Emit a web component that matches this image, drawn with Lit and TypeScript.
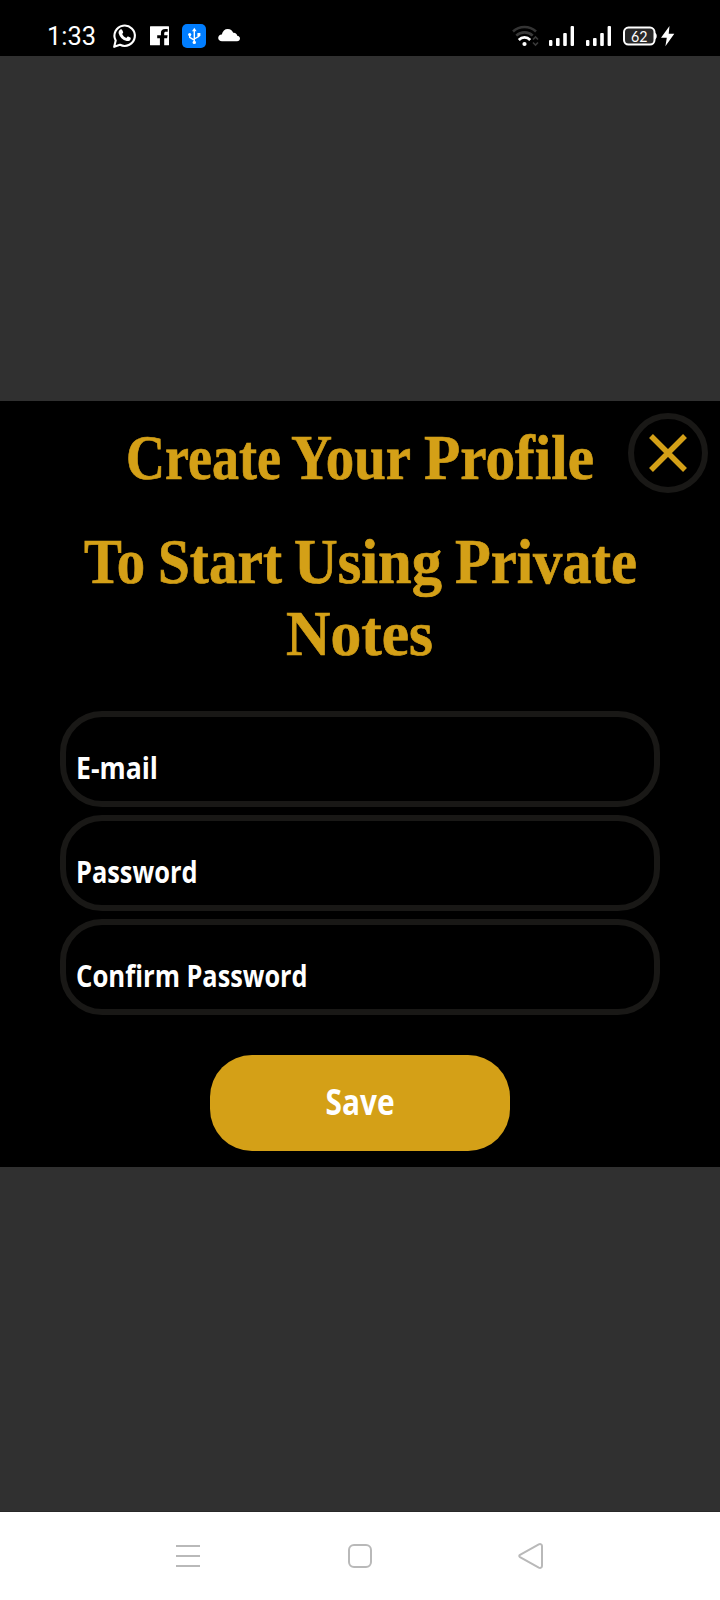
import { LitElement, html, svg, css } from "lit";
import { customElement, property } from "lit/decorators.js";

interface Word {
  t: string;
  x: number;
  w: number;
}

/** One line of text whose words are fitted to given widths. */
@customElement("fitted-line")
class FittedLine extends LitElement {
  @property({ attribute: false }) words: Word[] = [];
  @property({ type: Number }) width = 720;
  @property({ type: Number }) height = 72;
  @property({ type: Number }) baseline = 50;

  static styles = css`
    :host { display: block; }
    svg { display: block; overflow: visible; }
  `;

  render() {
    return html`<svg width=${this.width} height=${this.height} fill="currentColor">
      ${this.words.map(
        (w) => svg`<text x=${w.x} y=${this.baseline} textLength=${w.w} lengthAdjust="spacingAndGlyphs">${w.t}</text>`
      )}
    </svg>`;
  }
}

@customElement("status-bar")
class StatusBar extends LitElement {
  static styles = css`
    :host {
      display: flex;
      justify-content: space-between;
      height: 56px;
      box-sizing: border-box;
      padding: 22px 45px 0 46px;
      background: #000;
      color: #fff;
    }
    .group { display: flex; }
    svg { display: block; flex: none; }
    .clock { font: 400 25px Roboto, sans-serif; width: 66px; }
    .chat { margin-right: 13px; }
    .social { margin-right: 13px; }
    .usb { margin-right: 11px; }
    .wifi { margin-right: 10px; }
    .signal { margin-right: 12px; }
    .battery { margin-right: 3px; font: 400 15.5px Lato, sans-serif; }
  `;

  private signal() {
    return html`<svg class="signal" width="25" height="26" fill="#fff">
      <rect x="0" y="18" width="3.4" height="6" rx="1" />
      <rect x="7" y="16" width="3.6" height="8" rx="1" />
      <rect x="14.2" y="11" width="3.6" height="13" rx="1" />
      <rect x="21.6" y="4" width="3.4" height="20" rx="1" />
    </svg>`;
  }

  render() {
    return html`
      <div class="group">
        <fitted-line class="clock" .words=${[{ t: "1:33", x: 1, w: 49 }]} .width=${66} .height=${28} .baseline=${22.5}></fitted-line>
        <svg class="chat" width="25" height="28" fill="none" stroke="#fff">
          <path d="M2.200 24.800 3.700 18.600A10.200 10.200 0 1 1 8 22.800Z" stroke-width="2.100" stroke-linejoin="round" />
          <path fill="#fff" stroke="none" d="M8.300 7.600c.8-.6 1.500-.5 1.900.3l.9 2c.2.6 0 1-.9 2 .9 1.900 2.200 3.100 4.200 4 1-1.200 1.300-1.500 1.800-1.300l2.100 1c.6.3.6.9.2 1.800-.6 1.300-2.200 1.900-3.800 1.500-4.200-1-7-3.900-8-7.500-.4-1.500.3-2.900 1.600-3.800Z" />
        </svg>
        <svg class="social" width="19" height="28">
          <path fill="#fff" d="M.5 4.300h18a.5.5 0 0 1 .5.500v18a.5.5 0 0 1-.5.500h-4.300v-7h2.900l.5-3.100h-3.400v-1.800c0-1 .5-1.600 1.700-1.600h1.800V7h-2.500c-2.800 0-4.300 1.500-4.300 4.100v2.100H7.200v3.100h2.700v7H.5a.5.5 0 0 1-.5-.5v-18a.5.5 0 0 1 .5-.5Z" />
        </svg>
        <svg class="usb" width="24" height="28">
          <rect y="2" width="24" height="24" rx="5" fill="#007dff" />
          <g fill="none" stroke="#fff" stroke-width="1.400">
            <path d="M12.300 8v13M12.300 18.200 7.700 15.300V12M12.300 17l4.600-2.700V11.600" />
          </g>
          <g fill="#fff">
            <path d="m12.300 5.800 2.300 3.500H10Z" />
            <circle cx="12.300" cy="20.400" r="1.700" />
            <circle cx="7.700" cy="12.600" r="1.600" />
            <path d="M15.400 11h3v3h-3Z" />
          </g>
        </svg>
        <svg width="24" height="28">
          <path fill="#fff" d="M5 19.200C2.700 19.200 1.200 17.800 1.200 16c0-1.900 1.400-3.300 3.600-3.500C5.600 9 7.800 7 10.700 7c2.900 0 4.500 1.400 5.500 3.700 2.500-.2 3.700 1.200 4 3 1.800.2 2.800 1.300 2.800 2.700 0 1.600-1.200 2.800-3 2.800Z" />
        </svg>
      </div>
      <div class="group">
        <svg class="wifi" width="27" height="28" fill="none" stroke-width="2.600">
          <path stroke="#343434" d="M1 9.500C7.500 3.500 17.500 3.500 24 9.500" />
          <path stroke="#3a3a3a" d="M4.300 13.600C9 9.300 16.200 9.300 20.700 13.600" />
          <path stroke="#fff" d="M6.800 18C10 14.500 15 14.500 18.200 18" />
          <circle cx="12.500" cy="22" r="2.100" fill="#fff" />
          <path stroke="#3a3a3a" stroke-width="1.600" d="m21 17.500 2.500-2.500 2.500 2.500M21 20.500l2.500 2.500 2.500-2.500" />
        </svg>
        ${this.signal()} ${this.signal()}
        <div class="battery">
          <svg width="34" height="28">
            <rect x="1" y="5.600" width="30.500" height="17" rx="4.500" fill="#282828" stroke="#fff" stroke-width="2" />
            <path d="M31.500 10.500c1.800.8 2.200 2 2.200 3.600s-.4 2.800-2.200 3.600Z" fill="#fff" />
            <text x="8" y="19.500" textLength="16.500" lengthAdjust="spacingAndGlyphs" fill="#fff">62</text>
          </svg>
        </div>
        <svg width="15" height="28">
          <path fill="#fff" d="M9.500 4 1 15.800h5.800L5.400 24.300 14.300 11.800H8.700Z" />
        </svg>
      </div>
    `;
  }
}

@customElement("nav-bar")
class NavBar extends LitElement {
  static styles = css`
    :host {
      display: flex;
      justify-content: space-between;
      align-items: center;
      height: 89px;
      box-sizing: border-box;
      padding: 0 176px 1px 175px;
      background: #fff;
      border-top: 1px solid #282828;
    }
    svg { display: block; }
  `;

  render() {
    return html`
      <svg width="26" height="28" stroke="#b9b9b9" stroke-width="2"><path d="M1 4h24M1 14h24M1 24h24" /></svg>
      <svg width="26" height="28" fill="none" stroke="#b9b9b9" stroke-width="2"><rect x="2" y="3" width="22" height="22" rx="5" /></svg>
      <svg width="26" height="28" fill="none" stroke="#b9b9b9" stroke-width="2" stroke-linejoin="round">
        <path d="M2 12.900 20.800 2.400c1.600-.8 3.200 0 3.200 1.600v20c0 1.600-1.600 2.400-3.200 1.600L2 15.100c-1-.6-1-1.600 0-2.200Z" />
      </svg>
    `;
  }
}

@customElement("app-root")
class AppRoot extends LitElement {
  static styles = css`
    :host {
      display: flex;
      flex-direction: column;
      width: 720px;
      height: 1600px;
      overflow: hidden;
      background: #303030;
    }
    .backdrop {
      flex: 1;
      display: flex;
      flex-direction: column;
      padding-top: 345px;
    }
    .dialog {
      position: relative;
      height: 766px;
      box-sizing: border-box;
      background: #000;
      padding-top: 22px;
    }
    .title {
      margin: 0;
      color: #d4a017;
      font: 700 63px "Liberation Serif", serif;
      stroke: #d4a017;
      stroke-width: 0.7px;
    }
    .subtitle { margin-top: 32px; }
    .close {
      position: absolute;
      top: 12px;
      right: 12px;
      width: 80px;
      height: 80px;
      box-sizing: border-box;
      padding: 0;
      border: 6px solid #191816;
      border-radius: 50%;
      background: #000;
      display: grid;
      place-items: center;
    }
    .form {
      display: flex;
      flex-direction: column;
      gap: 8px;
      margin: 40px 60px 0;
    }
    .field {
      height: 96px;
      box-sizing: border-box;
      border: 6px solid #191816;
      border-radius: 42px;
      color: #fff;
      font: 700 31px "Open Sans", sans-serif;
    }
    .save {
      display: block;
      width: 300px;
      height: 96px;
      margin: 40px auto 0;
      padding: 0;
      border: 0;
      border-radius: 42px;
      background: #d4a017;
      color: #fff;
      font: 700 35px "Open Sans", sans-serif;
    }
  `;

  private fields: Word[][] = [
    [{ t: "E-mail", x: 10, w: 82 }],
    [{ t: "Password", x: 10, w: 121.5 }],
    [{ t: "Confirm", x: 10, w: 104 }, { t: "Password", x: 120.5, w: 121 }],
  ];

  render() {
    return html`
      <status-bar></status-bar>
      <main class="backdrop">
        <section class="dialog">
          <h1 class="title">
            <fitted-line
              .words=${[{ t: "Create", x: 126, w: 155 }, { t: "Your", x: 291, w: 120 }, { t: "Profile", x: 424, w: 170 }]}
              .baseline=${55.500}
            ></fitted-line>
          </h1>
          <h1 class="title subtitle">
            <fitted-line
              .words=${[{ t: "To", x: 84, w: 61 }, { t: "Start", x: 158, w: 124 }, { t: "Using", x: 294, w: 148 }, { t: "Private", x: 455, w: 182 }]}
              .baseline=${56}
            ></fitted-line>
            <fitted-line .words=${[{ t: "Notes", x: 286, w: 147 }]} .baseline=${56}></fitted-line>
          </h1>
          <button class="close" aria-label="Close">
            <svg width="40" height="40" stroke="#d4a017" stroke-width="5.5">
              <path d="M3 3 37 37M37 3 3 37" />
            </svg>
          </button>
          <div class="form">
            ${this.fields.map(
              (words) => html`<div class="field">
                <fitted-line .words=${words} .width=${560} .height=${84} .baseline=${62}></fitted-line>
              </div>`
            )}
          </div>
          <button class="save">
            <fitted-line .words=${[{ t: "Save", x: 115.5, w: 69 }]} .width=${300} .height=${96} .baseline=${60}></fitted-line>
          </button>
        </section>
      </main>
      <nav-bar></nav-bar>
    `;
  }
}
